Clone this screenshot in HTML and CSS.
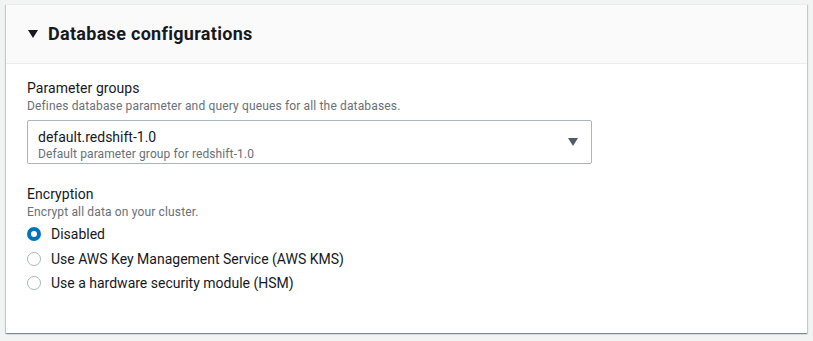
FILE: index.html
```html
<!DOCTYPE html>
<html lang="en">
<head>
    <meta charset="UTF-8">
    <title>Database configurations</title>
    <link rel="stylesheet" href="styles.css">
</head>
<body>
    <div class="card">
        <div class="card-header">
            <span class="caret"></span>
            <h2>Database configurations</h2>
        </div>
        <div class="card-body">
            <div class="field">
                <div class="label">Parameter groups</div>
                <div class="desc">Defines database parameter and query queues for all the databases.</div>
                <div class="select">
                    <div class="select-text">
                        <div class="select-value">default.redshift-1.0</div>
                        <div class="select-desc">Default parameter group for redshift-1.0</div>
                    </div>
                    <span class="select-caret"></span>
                </div>
            </div>

            <div class="field field-enc">
                <div class="label">Encryption</div>
                <div class="desc">Encrypt all data on your cluster.</div>
                <div class="radios">
                    <label class="radio"><span class="dot checked"></span>Disabled</label>
                    <label class="radio"><span class="dot"></span>Use AWS Key Management Service (AWS KMS)</label>
                    <label class="radio"><span class="dot"></span>Use a hardware security module (HSM)</label>
                </div>
            </div>
        </div>
    </div>
</body>
</html>
```

FILE: styles.css
```css
body {
    margin: 0;
    padding: 4px 6px 7px 6px;
    background: #f2f3f3;
    font-family: Roboto, "Liberation Sans", sans-serif;
    color: #16191f;
}
.card {
    height: 329px;
    background: #fff;
    border-top: 1px solid #eaeded;
    box-shadow: 0 1px 1px 0 rgba(0, 28, 36, .3), 1px 1px 1px 0 rgba(0, 28, 36, .15), -1px 1px 1px 0 rgba(0, 28, 36, .15);
    box-sizing: border-box;
}
.card-header {
    display: flex;
    align-items: center;
    height: 58px;
    padding-left: 22px;
    background: #fafafa;
    border-bottom: 1px solid #eaeded;
}
.caret {
    width: 0;
    height: 0;
    border-left: 5px solid transparent;
    border-right: 5px solid transparent;
    border-top: 8px solid #16191f;
    margin-right: 10px;
}
.card-header h2 {
    margin: 0;
    font-size: 18px;
    font-weight: 700;
    line-height: 22px;
    letter-spacing: 0.3px;
}
.card-body {
    padding: 14px 21px 0 21px;
}
.label {
    font-size: 14px;
    line-height: 20px;
    letter-spacing: 0.05px;
}
.desc {
    font-size: 12px;
    line-height: 16px;
    color: #687078;
    letter-spacing: 0.15px;
}
.select {
    display: flex;
    align-items: center;
    width: 565px;
    height: 44px;
    margin-top: 6px;
    padding: 5px 13px 2px 10px;
    border: 1px solid #aab7b8;
    border-radius: 2px;
    box-sizing: border-box;
}
.select-text {
    flex: 1;
}
.select-value {
    font-size: 14px;
    line-height: 20px;
}
.select-desc {
    font-size: 12px;
    line-height: 14px;
    color: #687078;
    letter-spacing: 0.1px;
}
.select-caret {
    width: 0;
    height: 0;
    border-left: 5px solid transparent;
    border-right: 5px solid transparent;
    border-top: 8px solid #545b64;
    margin-top: -4px;
}
.field-enc {
    margin-top: 20px;
}
.radios {
    display: flex;
    flex-direction: column;
    gap: 4.5px;
    margin-top: 4px;
}
.radio {
    display: flex;
    align-items: center;
    font-size: 14px;
    line-height: 20px;
}
.dot {
    width: 14px;
    height: 14px;
    margin-right: 10px;
    border: 1.5px solid #aab7b8;
    border-radius: 50%;
    box-sizing: border-box;
}
.dot.checked {
    border: 4px solid #0073bb;
}
```
